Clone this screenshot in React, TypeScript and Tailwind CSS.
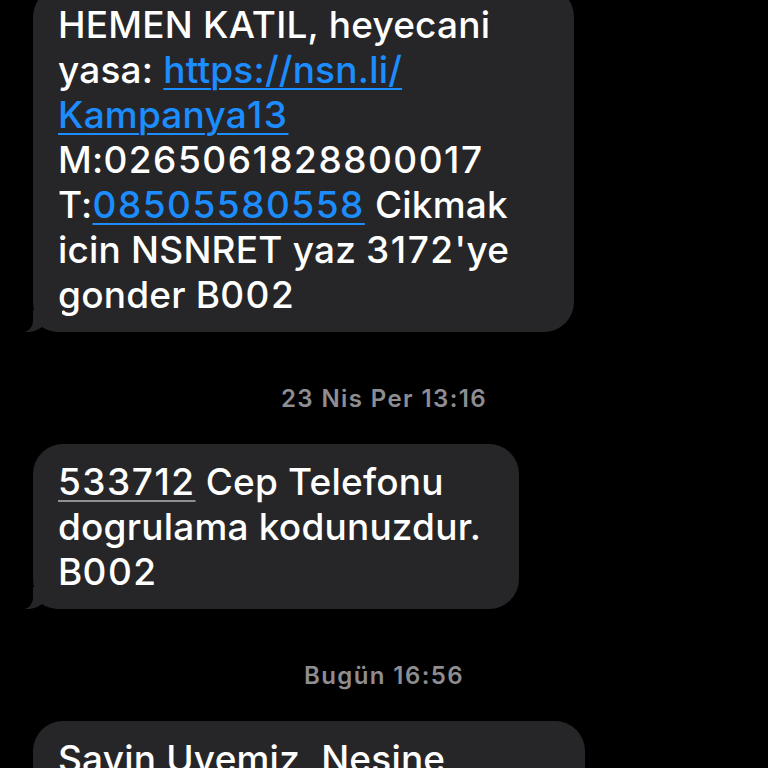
import type { ReactNode } from "react";

function Tail() {
    return (
        <svg
            className="absolute left-[-11px] bottom-0"
            width="40"
            height="22"
            viewBox="0 0 40 22"
            fill="#262628"
        >
            <path d="M11 0 L11 10 C11 16 8 20 3 22 C9 22.5 15 20.5 20 17 C25 20.5 30 22 40 22 L40 0 Z" />
        </svg>
    );
}

function Bubble({ width, lines }: { width: string; lines: ReactNode[] }) {
    return (
        <div className={`relative ml-[33px] ${width} rounded-[30px] bg-[#262628] pl-[25px] pt-[15px] pb-[15px]`}>
            {lines.map((line, i) => (
                <div key={i} className="whitespace-nowrap">{line}</div>
            ))}
            <Tail />
        </div>
    );
}

function Stamp({ children }: { children: ReactNode }) {
    return (
        <div className="mt-[52px] mb-[30px] text-center text-[24px] leading-[30px] font-semibold tracking-[1.4px] text-[#8d8d92]">
            {children}
        </div>
    );
}

// digits in the original font run wider
function N({ children }: { children: ReactNode }) {
    return <span className="tracking-[1.5px]">{children}</span>;
}

const link = "text-[#1c8dff] underline decoration-2 underline-offset-[5px]";

export default function App() {
    return (
        <div className="h-[768px] overflow-hidden bg-black font-['Inter','Liberation_Sans',sans-serif] text-white">
            <div className="mt-[-13px] flex flex-col text-[37px] leading-[45px] font-medium tracking-[0.2px]">
                <Bubble
                    width="w-[541px]"
                    lines={[
                        "HEMEN KATIL, heyecani",
                        <>yasa: <span className={link}>https://nsn.li/</span></>,
                        <span className={link}>Kampanya<N>13</N></span>,
                        <>M:<N>0265061828800017</N></>,
                        <>T:<span className={link}><N>08505580558</N></span> Cikmak</>,
                        <>icin NSNRET yaz <N>3172</N>'ye</>,
                        <>gonder B<N>002</N></>,
                    ]}
                />
                <Stamp>23 Nis Per 13:16</Stamp>
                <Bubble
                    width="w-[486px]"
                    lines={[
                        <><span className="underline decoration-2 decoration-[#8e8e93] underline-offset-[5px]"><N>533712</N></span> Cep Telefonu</>,
                        "dogrulama kodunuzdur.",
                        <>B<N>002</N></>,
                    ]}
                />
                <Stamp>Bugün 16:56</Stamp>
                <Bubble width="w-[552px]" lines={["Sayin Uyemiz, Nesine"]} />
            </div>
        </div>
    );
}
